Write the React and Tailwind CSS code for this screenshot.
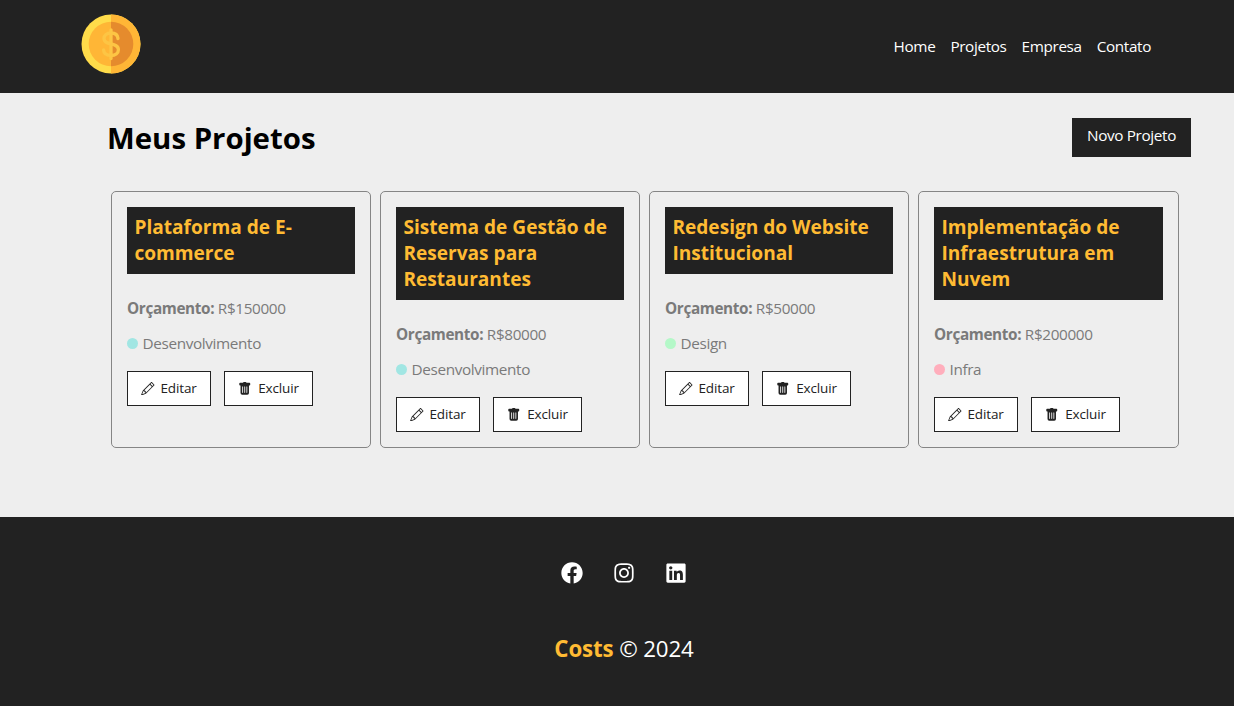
import React from "react";
import { BsPencil, BsFillTrashFill } from "react-icons/bs";
import { FaFacebook, FaInstagram, FaLinkedin } from "react-icons/fa";

const projects = [
  { name: "Plataforma de E-commerce", budget: 150000, category: "Desenvolvimento", dot: "bg-[#a1e6e3]" },
  { name: "Sistema de Gestão de Reservas para Restaurantes", budget: 80000, category: "Desenvolvimento", dot: "bg-[#a1e6e3]" },
  { name: "Redesign do Website Institucional", budget: 50000, category: "Design", dot: "bg-[#b4f8c8]" },
  { name: "Implementação de Infraestrutura em Nuvem", budget: 200000, category: "Infra", dot: "bg-[#ffaebc]" },
];

function Coin() {
  return (
    <svg viewBox="0 0 60 60" className="size-[60px]" aria-hidden="true">
      <circle cx="30" cy="30" r="29.5" fill="#ffdc4a" />
      <path d="M30 .5a29.5 29.5 0 0 1 0 59z" fill="#ffb636" />
      <circle cx="30" cy="30" r="22.3" fill="#ffb636" />
      <path d="M30 7.7a22.3 22.3 0 0 1 0 44.6z" fill="#e58b2d" />
      <g fill="none" stroke="#fdc544" strokeWidth="3.3" strokeLinecap="round" strokeLinejoin="round">
        <path d="M30 15.8v28.8" />
        <path d="M37 24.5c-.3-3.600-3.200-5.500-7-5.500-4.200 0-7 2-7 5.500 0 7.500 14.400 3.400 14.400 11.300 0 3.500-3 5.700-7.400 5.700-4.300 0-7.300-2-7.400-5.700" />
      </g>
    </svg>
  );
}

function ProjectCard({ project }) {
  return (
    <article className="flex h-[257px] flex-col items-start rounded-[5px] border border-[#858585] px-[15px] pt-[15px] text-[15.3px] tracking-[-0.36px] text-[#7a7a7a]">
      <h4 className="mb-6 w-full bg-[#222] px-[7.4px] pt-[7px] pb-2 text-[19.1px] leading-[26px] font-bold tracking-normal text-[#ffbb33]">
        {project.name}
      </h4>
      <p className="mb-[15px] leading-5">
        <b>Orçamento:</b> R${project.budget}
      </p>
      <p className="mb-[18px] flex items-center leading-5">
        <span className={"mr-[4.5px] size-[11px] rounded-full " + project.dot} />
        {project.category}
      </p>
      <div className="flex gap-[13px] text-[13.5px] leading-[19px] tracking-[-0.14px] text-[#222]">
        <a className="flex h-[35px] items-center border border-[#222] bg-white px-[13px]">
          <BsPencil className="mr-[6px]" />
          Editar
        </a>
        <a className="flex h-[35px] items-center border border-[#222] bg-white px-[13px]">
          <BsFillTrashFill className="mr-[7px]" />
          Excluir
        </a>
      </div>
    </article>
  );
}

export default function App() {
  return (
    <div className="flex h-[706px] flex-col bg-[#eee] font-['Open_Sans',sans-serif]">
      <header className="flex h-[93px] items-center justify-between bg-[#222] pr-[83px] pb-[5px] pl-[81px]">
        <Coin />
        <nav className="flex gap-[15px] pt-1 text-[15.3px] leading-5 tracking-[-0.36px] text-white">
          <a>Home</a>
          <a>Projetos</a>
          <a>Empresa</a>
          <a>Contato</a>
        </nav>
      </header>
      <main className="flex h-[424px] flex-col">
        <div className="flex h-[67px] justify-between pt-[25px] pr-[43px] pl-[107px]">
          <h1 className="text-[29.4px] leading-10 font-bold text-black">Meus Projetos</h1>
          <a className="h-[39px] bg-[#222] px-[15px] pt-[7px] text-[15.3px] leading-[21px] tracking-[-0.36px] text-white">Novo Projeto</a>
        </div>
        <section className="mt-[31px] grid grid-cols-[260px_260px_260px_261px] gap-[9px] pl-[111px]">
          {projects.map((p) => (
            <ProjectCard key={p.name} project={p} />
          ))}
        </section>
      </main>
      <footer className="flex flex-1 flex-col items-center bg-[#222] pt-[45px] pl-[14px] text-white">
        <div className="flex gap-[29.6px] text-[22px]">
          <FaFacebook />
          <FaInstagram />
          <FaLinkedin />
        </div>
        <p className="mt-[49px] text-[22.3px] leading-[31px] tracking-[-0.14px]">
          <span className="font-bold text-[#ffbb33]">Costs</span> © 2024
        </p>
      </footer>
    </div>
  );
}
